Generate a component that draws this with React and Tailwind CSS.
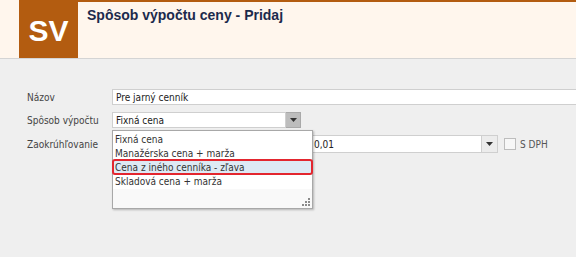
import React from "react";

const font = { fontFamily: '"Liberation Sans", Arial, sans-serif' };
const formFont = { fontFamily: '"DejaVu Sans Condensed", "DejaVu Sans", sans-serif' };

function Arrow({ className = "" }) {
  return (
    <svg width="7" height="4" viewBox="0 0 7 4" className={className}>
      <path d="M0 0h7L3.5 4z" fill="#333" />
    </svg>
  );
}

function Grip() {
  // resize grip: little triangle of dots
  const dots = [
    [6, 0],
    [3, 3],
    [6, 3],
    [0, 6],
    [3, 6],
    [6, 6],
  ];
  return (
    <svg width="8" height="8" viewBox="0 0 8 8">
      {dots.map(([x, y], i) => (
        <rect key={i} x={x} y={y} width="2" height="2" fill="#8a8a8a" />
      ))}
    </svg>
  );
}

export default function App() {
  return (
    <div
      className="w-[576px] h-[257px] overflow-hidden bg-[#efefef] text-[10px] text-[#333]"
      style={font}
    >
      {/* header */}
      <div className="flex h-[59px] border-b border-[#d4d4d4] bg-[#fff6ed]">
        <div className="w-[19px]" />
        <div className="flex w-[59px] items-center justify-center bg-[#b35c10] pt-[2px] text-[30px] font-bold text-white">
          SV
        </div>
        <div className="flex-1 border-t-2 border-[#b35c10] pl-[9px] pt-[3px] text-[14px] font-bold text-[#1c2a4c]">
          Spôsob výpočtu ceny - Pridaj
        </div>
      </div>

      {/* form */}
      <div className="flex flex-col pt-[30px]" style={formFont}>
        <div className="flex h-[16px] items-center">
          <div className="w-[112px] pl-[27px] text-[#444]">Názov</div>
          <div className="flex h-full flex-1 items-center border border-r-0 border-[#cfcfcf] bg-white pl-[3px] text-[#222]">
            Pre jarný cenník
          </div>
        </div>

        <div className="mt-[7px] flex h-[16px] items-center">
          <div className="w-[112px] pl-[27px] text-[#444]">Spôsob výpočtu</div>
          <div className="relative flex h-full w-[189px]">
            <div className="flex flex-1 items-center border border-[#cfcfcf] bg-white pl-[3px] text-[#222]">
              Fixná cena
            </div>
            <div className="flex w-[15px] items-center justify-center border border-l-0 border-[#a9a9a9] bg-[#bdbdbd]">
              <Arrow />
            </div>

            {/* open dropdown list */}
            <div className="absolute left-0 top-[18px] z-10 flex h-[79px] w-[201px] flex-col border border-[#a8a8a8] bg-[#f9f9f9] shadow-[1px_1px_2px_rgba(0,0,0,0.25)]">
              <div className="flex flex-col bg-white pt-[1px] pb-[1px] text-[#333]">
                <div className="flex h-[14px] items-center pl-[2px]">Fixná cena</div>
                <div className="flex h-[14px] items-center pl-[2px]">Manažérska cena + marža</div>
                <div className="relative flex h-[14px] items-center bg-[#dde9f4] pl-[2px]">
                  Cena z iného cenníka - zľava
                  <div className="absolute -left-[1px] -right-[1px] -top-[1px] -bottom-[1px] rounded-[3px] border-2 border-[#e3262f]" />
                </div>
                <div className="flex h-[14px] items-center pl-[2px]">Skladová cena + marža</div>
              </div>
              <div className="flex flex-1 items-end justify-end pb-[2px] pr-[2px]">
                <Grip />
              </div>
            </div>
          </div>
        </div>

        <div className="mt-[7px] flex h-[18px] items-center">
          <div className="w-[112px] pl-[27px] text-[#444]">Zaokrúhľovanie</div>
          <div className="flex h-full w-[386px]">
            <div className="flex flex-1 items-center border border-[#cfcfcf] bg-white pl-[201px] text-[#222]">
              0,01
            </div>
            <div className="flex w-[16px] items-center justify-center border border-l-0 border-[#cfcfcf] bg-[#ececec]">
              <Arrow />
            </div>
          </div>
          <div className="ml-[6px] h-[12px] w-[12px] border border-[#bdbdbd] bg-[#f7f7f7]" />
          <div className="ml-[4px] text-[#555]">S DPH</div>
        </div>
      </div>
    </div>
  );
}
